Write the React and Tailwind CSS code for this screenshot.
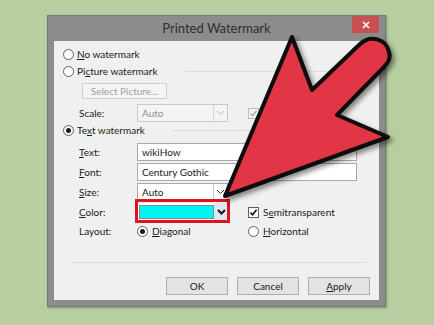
// Boîte de dialogue "Printed Watermark" avec une grosse flèche rouge par-dessus
function Radio({ checked }) {
  return (
    <span className="w-[11px] h-[11px] rounded-full border border-[#5f5f5f] bg-white flex items-center justify-center shrink-0">
      {checked && <span className="w-[5px] h-[5px] rounded-full bg-[#1a1a1a]" />}
    </span>
  );
}

function Check() {
  return (
    <span className="w-[11px] h-[11px] border border-[#5f5f5f] bg-white flex items-center justify-center shrink-0">
      <svg width="9" height="9" viewBox="0 0 9 9">
        <path d="M1.5 4.6 L3.6 6.8 L7.6 1.8" fill="none" stroke="#111" strokeWidth="1.6" />
      </svg>
    </span>
  );
}

function Chevron({ color = "#222", bold }) {
  return (
    <svg width="9" height="6" viewBox="0 0 9 6">
      <path d="M1 1 L4.5 4.5 L8 1" fill="none" stroke={color} strokeWidth={bold ? 2 : 1} />
    </svg>
  );
}

function Combo({ value, disabled }) {
  return (
    <div className={`w-[91px] h-[18px] flex border ${disabled ? "border-[#c9c9c9] bg-[#f4f4f4]" : "border-[#a9a9a9] bg-white"}`}>
      <span className={`flex-1 pl-[4px] leading-[16px] ${disabled ? "text-[#8d8d8d]" : "text-[#1a1a1a]"}`}>{value}</span>
      <span className={`w-[14px] border-l flex items-center justify-center ${disabled ? "border-[#d5d5d5]" : "border-[#c4c4c4]"}`}>
        <Chevron color={disabled ? "#b4b4b4" : "#333"} />
      </span>
    </div>
  );
}

function Ligne({ label, u, rest, children, className = "" }) {
  return (
    <div className={`h-[18px] flex items-center ${className}`}>
      <span className="w-[58px] pl-[25px] box-content text-[#1a1a1a]">
        {u ? (
          <>
            <span className="underline">{u}</span>
            {rest}
          </>
        ) : (
          label
        )}
      </span>
      {children}
    </div>
  );
}

function Bouton({ children }) {
  return (
    <div className="w-[62px] h-[18px] border border-[#adadad] bg-[#e3e3e3] flex items-center justify-center text-[#1a1a1a]">
      {children}
    </div>
  );
}

export default function App() {
  return (
    <div
      className="relative w-[434px] h-[325px] overflow-hidden bg-[#b6cea0] pt-[15px] pl-[47px] text-[10px]"
      style={{ fontFamily: 'Lato, "Noto Sans", sans-serif' }}
    >
      {/* cadre de la fenêtre */}
      <div className="w-[339px] h-[292px] bg-[#8c8c8c] border border-[#777] flex flex-col px-[6px] pb-[6px] shadow-[1px_1px_2px_rgba(0,0,0,0.3)]">
        <div className="relative h-[25px] flex items-center justify-center text-[13px] text-[#2e2e2e]">
          Printed Watermark
          <div className="absolute right-[0px] top-0 w-[27px] h-[17px] bg-[#c75050] flex items-center justify-center">
            <svg width="8" height="8" viewBox="0 0 8 8">
              <path d="M1 1 L7 7 M7 1 L1 7" stroke="#fff" strokeWidth="1.6" />
            </svg>
          </div>
        </div>

        {/* zone client */}
        <div className="relative flex-1 bg-[#f0f0f0] flex flex-col pt-[6px]">
          <div className="h-[14px] flex items-center gap-[3px] pl-[9px] text-[#1a1a1a]">
            <Radio />
            <span>
              <span className="underline">N</span>o watermark
            </span>
          </div>
          <div className="mt-[3px] h-[14px] flex items-center gap-[3px] pl-[9px] text-[#1a1a1a]">
            <Radio />
            <span>
              Pi<span className="underline">c</span>ture watermark
            </span>
            <span className="flex-1 h-px bg-[#dcdcdc] ml-[24px] mr-[10px]" />
          </div>
          <div className="mt-[5px] ml-[28px] w-[85px] h-[16px] border border-[#cfcfcf] bg-[#f4f4f4] flex items-center justify-center text-[#a0a0a0]">
            Select Picture...
          </div>
          <Ligne label="Scale:" className="mt-[5px]">
            <Combo value="Auto" disabled />
            <span className="ml-[20px] w-[11px] h-[11px] border border-[#bcbcbc] bg-[#f4f4f4] flex items-center justify-center">
              <svg width="9" height="9" viewBox="0 0 9 9">
                <path d="M1.5 4.6 L3.6 6.8 L7.6 1.8" fill="none" stroke="#aaa" strokeWidth="1.4" />
              </svg>
            </span>
            <span className="ml-[4px] text-[#8d8d8d]">Washout</span>
          </Ligne>
          <div className="mt-[1px] h-[14px] flex items-center gap-[3px] pl-[9px] text-[#1a1a1a]">
            <Radio checked />
            <span>
              Te<span className="underline">x</span>t watermark
            </span>
            <span className="flex-1 h-px bg-[#dcdcdc] ml-[24px] mr-[10px]" />
          </div>
          <Ligne u="T" rest="ext:" className="mt-[6px]">
            <div className="w-[220px] h-[18px] border border-[#a9a9a9] bg-white pl-[4px] leading-[16px] text-[#1a1a1a]">wikiHow</div>
          </Ligne>
          <Ligne u="F" rest="ont:" className="mt-[2px]">
            <div className="w-[220px] h-[18px] border border-[#a9a9a9] bg-white pl-[4px] leading-[16px] text-[#1a1a1a]">Century Gothic</div>
          </Ligne>
          <Ligne u="S" rest="ize:" className="mt-[2px]">
            <Combo value="Auto" />
          </Ligne>
          <Ligne u="C" rest="olor:" className="mt-[2px]">
            <div className="relative w-[91px] h-[18px] flex bg-white">
              <span className="flex-1 m-[2px] mr-0 border border-[#8a8a8a] bg-[#00f4f4]" />
              <span className="w-[14px] bg-[#dbe7f4] flex items-center justify-center">
                <Chevron bold color="#111" />
              </span>
              <span className="absolute -left-[2px] -right-[2px] -top-[4px] -bottom-[2px] border-[3px] border-[#e0121c]" />
            </div>
            <span className="ml-[20px]">
              <Check />
            </span>
            <span className="ml-[4px] text-[#1a1a1a]">
              S<span className="underline">e</span>mitransparent
            </span>
          </Ligne>
          <Ligne label="Layout:" className="mt-[1px]">
            <span className="w-[111px] flex items-center">
              <Radio checked />
              <span className="ml-[4px] text-[#1a1a1a]">
                <span className="underline">D</span>iagonal
              </span>
            </span>
            <Radio />
            <span className="ml-[4px] text-[#1a1a1a]">
              <span className="underline">H</span>orizontal
            </span>
          </Ligne>

          <div className="mt-[22px] ml-[18px] mr-[13px] h-px bg-[#dadada]" />

          <div className="mt-[14px] flex justify-end gap-[9px] pr-[9px]">
            <Bouton>OK</Bouton>
            <Bouton>Cancel</Bouton>
            <Bouton>
              <span>
                <span className="underline">A</span>pply
              </span>
            </Bouton>
          </div>
        </div>
      </div>

      {/* flèche rouge par-dessus */}
      <svg className="absolute inset-0 pointer-events-none" width="434" height="325" viewBox="0 0 434 325">
        <defs>
          <filter id="ombre" x="-20%" y="-20%" width="140%" height="140%">
            <feDropShadow dx="3" dy="3" stdDeviation="2.5" floodColor="#000" floodOpacity="0.45" />
          </filter>
        </defs>
        <path
          d="M225 196 L292 37 L312 90 L360 44 C370 35 386 38 389 52 C391 58 388 63 384 67 L337 115 L388 137 Z"
          fill="#e23545"
          stroke="#0a0a0a"
          strokeWidth="4"
          strokeLinejoin="round"
          filter="url(#ombre)"
        />
      </svg>
    </div>
  );
}
